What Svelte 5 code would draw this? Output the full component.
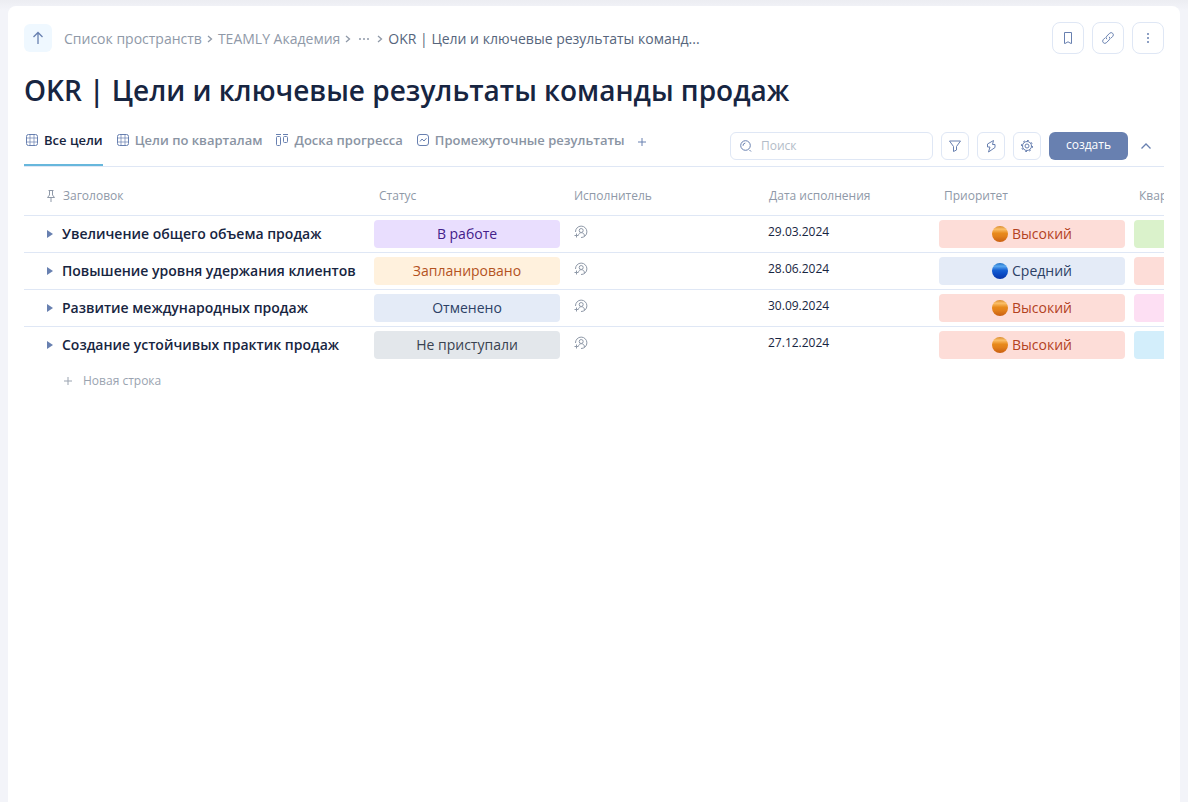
<script lang="ts">
  type Row = {
    title: string;
    status: string;
    statusTone: string;
    date: string;
    priority: string;
    priorityTone: string;
    ball: string;
    quarterTone: string;
  };

  const tabs = [
    { label: 'Все цели', icon: 'grid' },
    { label: 'Цели по кварталам', icon: 'grid' },
    { label: 'Доска прогресса', icon: 'board' },
    { label: 'Промежуточные результаты', icon: 'chart' }
  ];

  const rows: Row[] = [
    { title: 'Увеличение общего объема продаж', status: 'В работе', statusTone: 'purple', date: '29.03.2024', priority: 'Высокий', priorityTone: 'red', ball: 'orange', quarterTone: 'green' },
    { title: 'Повышение уровня удержания клиентов', status: 'Запланировано', statusTone: 'yellow', date: '28.06.2024', priority: 'Средний', priorityTone: 'blue', ball: 'azure', quarterTone: 'red' },
    { title: 'Развитие международных продаж', status: 'Отменено', statusTone: 'blue', date: '30.09.2024', priority: 'Высокий', priorityTone: 'red', ball: 'orange', quarterTone: 'pink' },
    { title: 'Создание устойчивых практик продаж', status: 'Не приступали', statusTone: 'gray', date: '27.12.2024', priority: 'Высокий', priorityTone: 'red', ball: 'orange', quarterTone: 'sky' }
  ];

  let active = $state(0);
  let query = $state('');
</script>

{#snippet chevron()}
  <svg class="chevron" width="6" height="10" viewBox="0 0 6 10"><path d="M1 2l3.5 3L1 8" /></svg>
{/snippet}

<main class="page">
  <div class="topbar">
    <button class="up" aria-label="Наверх">
      <svg width="16" height="16" viewBox="0 0 16 16"><path d="M8 14V2.5M3.5 7L8 2.5 12.5 7" /></svg>
    </button>
    <nav class="crumbs">
      <a href="#spaces">Список пространств</a>
      {@render chevron()}
      <a href="#academy">TEAMLY Академия</a>
      {@render chevron()}
      <button class="more" aria-label="Показать весь путь">
        <svg width="12" height="4" viewBox="0 0 12 4"><circle cx="2" cy="2" r="1" /><circle cx="6" cy="2" r="1" /><circle cx="10" cy="2" r="1" /></svg>
      </button>
      {@render chevron()}
      <a class="current" href="#okr">OKR | Цели и ключевые результаты команд...</a>
    </nav>
    <div class="actions">
      <button class="square large" aria-label="В закладки">
        <svg width="16" height="16" viewBox="0 0 16 16"><path d="M4.5 2.5h7v11H11L8 11.8 5 13.5h-.5z" /></svg>
      </button>
      <button class="square large" aria-label="Скопировать ссылку">
        <svg width="16" height="16" viewBox="0 0 16 16"><path d="M6.8 9.2a2.2 2.2 0 0 1 0-3.1l2.900-2.900a2.200 2.200 0 0 1 3.100 3.100l-2 2" /><path d="M9.200 6.800a2.200 2.200 0 0 1 0 3.100l-2.900 2.900a2.200 2.200 0 0 1-3.100-3.100l2-2" /></svg>
      </button>
      <button class="square large" aria-label="Ещё">
        <svg class="filled" width="16" height="16" viewBox="0 0 16 16"><circle cx="8" cy="4" r="1" /><circle cx="8" cy="8" r="1" /><circle cx="8" cy="12" r="1" /></svg>
      </button>
    </div>
  </div>

  <h1>OKR | Цели и ключевые результаты команды продаж</h1>

  <div class="toolbar">
    <div class="tabs">
      {#each tabs as tab, i}
        <button class="tab" class:active={active === i} onclick={() => (active = i)}>
          <svg width="14" height="14" viewBox="0 0 14 14">
            {#if tab.icon === 'grid'}
              <rect x="1.5" y="1.5" width="11" height="11" rx="2" />
              <path class="thin" d="M5 1.5v11M9 1.5v11M1.5 5h11M1.5 9h11" />
            {:else if tab.icon === 'board'}
              <path d="M1 1.5h5M8 1.5h5" />
              <rect x="1.5" y="3.5" width="4" height="9" rx="1" />
              <rect x="8.5" y="3.5" width="4" height="6" rx="1" />
            {:else}
              <rect x="1.5" y="1.5" width="11" height="11" rx="2.5" />
              <path d="M4 8.5l2-2.5 2 2 2.500-2.800" />
            {/if}
          </svg>
          {tab.label}
        </button>
      {/each}
      <button class="add-tab" aria-label="Добавить представление">
        <svg width="10" height="10" viewBox="0 0 10 10"><path d="M5 1v8M1 5h8" /></svg>
      </button>
    </div>
    <div class="tools">
      <label class="search">
        <svg width="14" height="14" viewBox="0 0 14 14"><circle cx="6.5" cy="6.5" r="4.8" /><path d="M4 6.8a2.700 2.700 0 0 1 2.300-2.800M10.500 11l1.500 1.500" /></svg>
        <input type="text" placeholder="Поиск" aria-label="Поиск" bind:value={query} />
      </label>
      <button class="square" aria-label="Фильтр">
        <svg width="14" height="14" viewBox="0 0 14 14"><path d="M1.500 2h11L8.500 7.500V11l-3 1.500v-5z" /></svg>
      </button>
      <button class="square" aria-label="Автоматизация">
        <svg width="14" height="14" viewBox="0 0 14 14"><path d="M9.500 1.500L3.500 5v3H6l-1.500 5L11 8.500V5.500H8.500z" /></svg>
      </button>
      <button class="square" aria-label="Настройки">
        <svg width="14" height="14" viewBox="0 0 14 14">
          <circle cx="7" cy="7" r="2" />
          <circle cx="7" cy="7" r="4.5" />
          <circle class="teeth" cx="7" cy="7" r="5.5" pathLength="16" />
        </svg>
      </button>
      <button class="create">создать</button>
      <button class="collapse" aria-label="Свернуть">
        <svg width="12" height="8" viewBox="0 0 12 8"><path d="M1.500 6.500L6 2l4.500 4.500" /></svg>
      </button>
    </div>
  </div>

  <div class="table-wrap">
    <table>
      <colgroup>
        <col class="c-title" />
        <col class="c-wide" />
        <col class="c-wide" />
        <col class="c-date" />
        <col class="c-wide" />
        <col class="c-wide" />
      </colgroup>
      <thead>
        <tr>
          <th class="first">
            <span class="pinned">
              <svg width="10" height="12" viewBox="0 0 10 12"><path d="M2.500 .5h5M3.500 .5v4.500L1.500 7.500h7l-2-2.500V.5M5 7.500V12" /></svg>
              Заголовок
            </span>
          </th>
          <th>Статус</th>
          <th>Исполнитель</th>
          <th>Дата исполнения</th>
          <th>Приоритет</th>
          <th>Квартал</th>
        </tr>
      </thead>
      <tbody>
        {#each rows as row}
          <tr>
            <td>
              <div class="title-cell">
                <button class="expand" aria-label="Развернуть">
                  <svg width="6" height="8" viewBox="0 0 6 8"><path d="M0 0l6 4-6 4z" /></svg>
                </button>
                {row.title}
              </div>
            </td>
            <td><div class="pill {row.statusTone}">{row.status}</div></td>
            <td>
              <button class="person" aria-label="Назначить исполнителя">
                <svg width="14" height="14" viewBox="0 0 14 14">
                  <path d="M1.500 7A5.700 5.700 0 1 1 7 12.500" />
                  <circle cx="7.200" cy="5.500" r="2" />
                  <path d="M4.500 9.800c.800-2.800 5-2.800 5.800 0v1.500M2.500 8.500v4M.5 10.500h4" />
                </svg>
              </button>
            </td>
            <td><div class="date">{row.date}</div></td>
            <td>
              <div class="pill {row.priorityTone}">
                <span class="ball {row.ball}"></span>{row.priority}
              </div>
            </td>
            <td><div class="pill {row.quarterTone}"></div></td>
          </tr>
        {/each}
      </tbody>
    </table>
  </div>

  <button class="new-row">
    <svg width="10" height="10" viewBox="0 0 10 10"><path d="M5 1v8M1 5h8" /></svg>
    Новая строка
  </button>
</main>

<style>
  :global(body) {
    background: linear-gradient(#ecedf2, #f3f4f9 10px);
  }

  :global(*) {
    box-sizing: border-box;
  }

  .page {
    min-height: calc(100vh - 6px);
    margin: 6px 8px 0;
    padding: 16px 16px 0;
    background: #fff;
    border-radius: 8px 8px 0 0;
    font-family: 'Open Sans', 'Noto Sans', sans-serif;
    font-size: 14px;
    line-height: 20px;
    color: #172541;
  }

  button {
    display: flex;
    align-items: center;
    justify-content: center;
    padding: 0;
    border: none;
    background: none;
    font: inherit;
    color: inherit;
    cursor: pointer;
  }

  svg {
    flex: none;
    fill: none;
    stroke: #6880b0;
    stroke-width: 1;
  }

  .topbar {
    display: flex;
    align-items: center;
  }

  .up {
    width: 28px;
    height: 28px;
    border-radius: 6px;
    background: #eff8ff;
  }

  .up svg {
    stroke-width: 1.3;
  }

  .crumbs {
    display: flex;
    align-items: center;
    gap: 5px;
    flex: 1;
    margin-left: 12px;
    padding-top: 2px;
    white-space: nowrap;
  }

  .crumbs a {
    color: #8f99a8;
    text-decoration: none;
  }

  .crumbs .current {
    color: #56657c;
  }

  .chevron {
    stroke: #8f99a8;
    stroke-width: 1.3;
  }

  .more {
    width: 16px;
    height: 20px;
  }

  .more svg {
    fill: #8f99a8;
    stroke: none;
  }

  .actions {
    display: flex;
    gap: 8px;
  }

  .square {
    width: 28px;
    height: 28px;
    border: 1px solid #dfe7f5;
    border-radius: 6px;
  }

  .square.large {
    width: 32px;
    height: 32px;
    border-radius: 8px;
  }

  .filled {
    fill: #6880b0;
    stroke: none;
  }

  .teeth {
    stroke-dasharray: 1;
  }

  h1 {
    margin: 16px 0;
    font-size: 28px;
    line-height: 40px;
    font-weight: 600;
  }

  .toolbar {
    display: flex;
    justify-content: space-between;
    height: 41px;
    border-bottom: 1px solid #dfe7f5;
  }

  .tabs {
    display: flex;
    gap: 12px;
  }

  .tab {
    align-items: flex-start;
    gap: 5px;
    height: 40px;
    padding-top: 4px;
    border-bottom: 2px solid transparent;
    font-size: 13px;
    font-weight: 600;
    color: #8a94a3;
    white-space: nowrap;
  }

  .tab svg {
    margin: 3px 0 0 1px;
  }

  .tab.active {
    border-bottom-color: #67b7dc;
    color: #172541;
  }

  .thin {
    stroke-width: 0.7;
  }

  .add-tab {
    height: 32px;
  }

  .tools {
    display: flex;
    gap: 8px;
    padding-top: 6px;
  }

  .search {
    display: flex;
    align-items: center;
    gap: 8px;
    width: 203px;
    height: 28px;
    padding: 0 8px;
    border: 1px solid #dfe7f5;
    border-radius: 6px;
  }

  .search input {
    width: 100%;
    min-width: 0;
    padding: 0;
    border: none;
    outline: none;
    background: none;
    font: inherit;
    font-size: 12px;
    color: inherit;
  }

  .search input::placeholder {
    color: #b3bcc8;
  }

  .create {
    height: 28px;
    padding: 0 17px 2px;
    border-radius: 6px;
    background: #6880b0;
    color: #fff;
    font-size: 12px;
    font-weight: 500;
  }

  .collapse {
    width: 36px;
    height: 28px;
    margin-left: -8px;
  }

  .collapse svg {
    stroke-width: 1.3;
  }

  .table-wrap {
    overflow: hidden;
  }

  table {
    width: 1301px;
    table-layout: fixed;
    border-spacing: 0;
  }

  .c-title {
    width: 346px;
  }

  .c-wide {
    width: 195px;
  }

  .c-date {
    width: 175px;
  }

  th {
    height: 49px;
    padding: 10px 9px 0;
    border-bottom: 1px solid #dfe7f5;
    text-align: left;
    font-size: 12px;
    font-weight: 400;
    color: #8f99a8;
  }

  .first {
    padding-left: 22px;
  }

  .pinned {
    display: flex;
    align-items: center;
    gap: 7px;
  }

  .pinned svg {
    stroke: #8f99a8;
  }

  td {
    height: 37px;
    padding: 0 5px 0 4px;
    border-bottom: 1px solid #dfe7f5;
    vertical-align: middle;
  }

  tbody tr:last-child td {
    border-bottom-color: transparent;
  }

  .title-cell {
    display: flex;
    align-items: center;
    gap: 9px;
    padding-left: 19px;
    font-weight: 600;
    white-space: nowrap;
  }

  .expand svg {
    fill: #6880b0;
    stroke: none;
  }

  .pill {
    display: flex;
    align-items: center;
    justify-content: center;
    gap: 4px;
    height: 28px;
    border-radius: 4px;
  }

  .purple {
    background: #e9defe;
    color: #43208a;
  }

  .yellow {
    background: #fff1dd;
    color: #b4531f;
  }

  .blue {
    background: #e4ebf7;
    color: #2c4166;
  }

  .gray {
    background: #e3e7eb;
    color: #384250;
  }

  .red {
    background: #fdddd8;
    color: #b3421f;
  }

  .green {
    background: #daf2cb;
  }

  .pink {
    background: #fddff3;
  }

  .sky {
    background: #d3eefb;
  }

  .ball {
    width: 16px;
    height: 16px;
    border-radius: 50%;
  }

  .orange {
    background: linear-gradient(#d98a2c, #fbc06a 20%, #e88a1c 45%, #e2801b 65%, #c95f12);
  }

  .azure {
    background: linear-gradient(#1f6fc4, #5aa8f0 20%, #1660d2 45%, #0c4fc8 65%, #0a35a8);
  }

  .person {
    margin: 0 0 4px 5px;
  }

  .person svg {
    stroke: #8f99a8;
  }

  .date {
    padding: 0 0 4px 4px;
    font-size: 12px;
  }

  .new-row {
    gap: 10px;
    height: 32px;
    margin: 1px 0 0 39px;
    font-size: 12px;
    color: #9aa3b0;
  }

  .new-row svg {
    stroke: #9aa3b0;
  }
</style>
